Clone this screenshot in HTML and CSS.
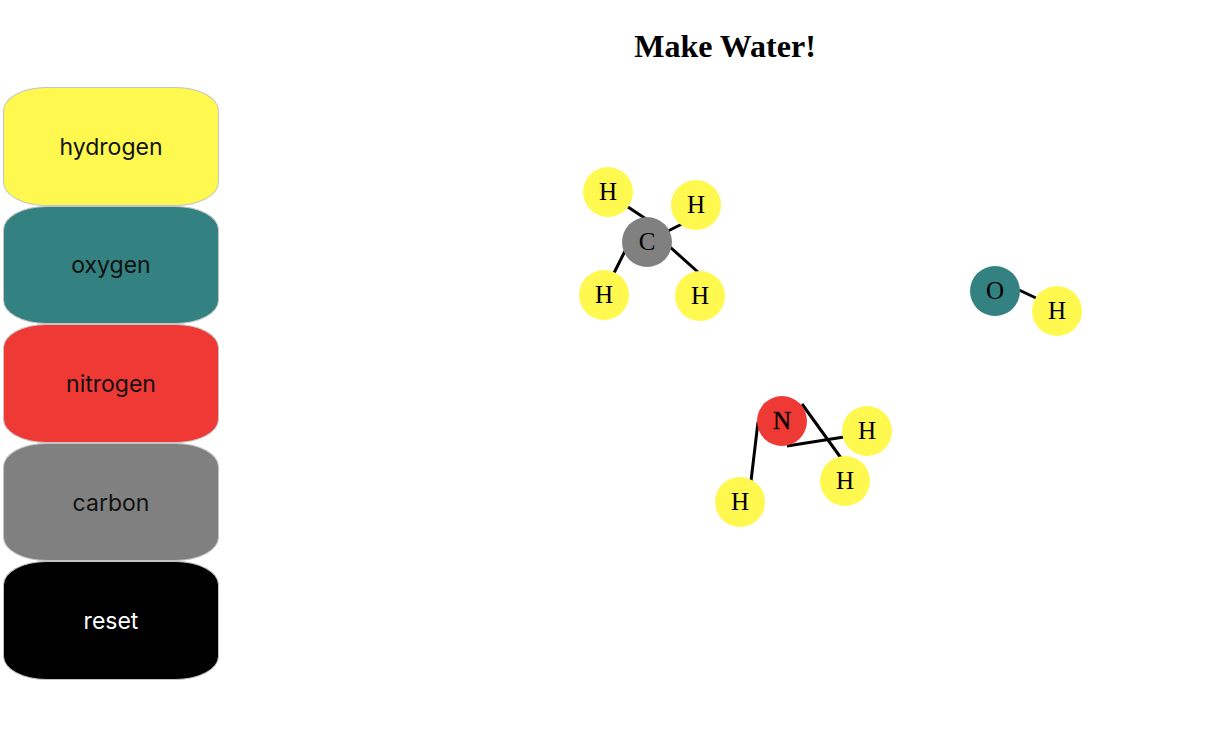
FILE: index.html
```html
<!DOCTYPE html>
<html lang="en">
<head>
  <meta charset="utf-8">
  <title>Make Water!</title>
  <link rel="stylesheet" href="styles.css">
</head>
<body>
  <nav class="palette" aria-label="Elements">
    <button type="button" class="element hydrogen">hydrogen</button>
    <button type="button" class="element oxygen">oxygen</button>
    <button type="button" class="element nitrogen">nitrogen</button>
    <button type="button" class="element carbon">carbon</button>
    <button type="button" class="element reset">reset</button>
  </nav>
  <main class="lab">
    <h1 class="title">Make Water!</h1>
    <svg class="stage">
      <!-- methane -->
      <g>
        <path class="bond" d="M409 120L427 132M449 144L463 137M406 164L395 186M451 160L480 186"/>
        <circle class="atom-h" cx="389" cy="105" r="25"/><text x="389" y="113">H</text>
        <circle class="atom-h" cx="477" cy="118" r="25"/><text x="477" y="126">H</text>
        <circle class="atom-c" cx="428" cy="155" r="25"/><text x="428" y="163">C</text>
        <circle class="atom-h" cx="385" cy="208" r="25"/><text x="385" y="216">H</text>
        <circle class="atom-h" cx="481" cy="209" r="25"/><text x="481" y="217">H</text>
      </g>
      <!-- hydroxide -->
      <g>
        <path class="bond" d="M800 203L817 211"/>
        <circle class="atom-o" cx="776" cy="204" r="25"/><text x="776" y="212">O</text>
        <circle class="atom-h" cx="838" cy="224" r="25"/><text x="838" y="232">H</text>
      </g>
      <!-- ammonia -->
      <g>
        <path class="bond" d="M539 335L532 394M583 317L622 371M568 359L625 350"/>
        <circle class="atom-n" cx="563" cy="334" r="25"/><text class="strong" x="563" y="342">N</text>
        <circle class="atom-h" cx="648" cy="344" r="25"/><text x="648" y="352">H</text>
        <circle class="atom-h" cx="626" cy="394" r="25"/><text x="626" y="402">H</text>
        <circle class="atom-h" cx="521" cy="415" r="25"/><text x="521" y="423">H</text>
      </g>
    </svg>
  </main>
</body>
</html>
```
FILE: styles.css
```css
* {
  box-sizing: border-box;
}

body {
  display: flex;
  min-height: 100vh;
  margin: 0;
  background: #fff;
  color: #000;
  font-family: "Liberation Serif", "Times New Roman", serif;
}

.palette {
  display: grid;
  grid-template-rows: repeat(5, 1fr);
  flex: 0 0 219px;
  padding: 87px 0 59px 3px;
}

.element {
  padding: 1px 0 0;
  border: 1px solid #c4c4c4;
  border-radius: 20%;
  color: #111;
  font-family: Inter, "Liberation Sans", sans-serif;
  font-size: 23px;
  line-height: 28px;
}

.hydrogen {
  background: #fff84f;
}

.oxygen {
  background: #338180;
}

.nitrogen {
  background: #ef3935;
}

.carbon {
  background: #808080;
}

.reset {
  background: #000;
  color: #fff;
}

.lab {
  display: flex;
  flex: 1;
  flex-direction: column;
  min-width: 0;
}

.title {
  margin: 0;
  padding: 28px 0 23px;
  font-size: 32px;
  line-height: 36px;
  text-align: center;
}

.stage {
  flex: 1;
  width: 100%;
}

.stage text {
  font-size: 25px;
  text-anchor: middle;
}

.stage .strong {
  paint-order: stroke;
  stroke: #000;
  stroke-opacity: 0.4;
  stroke-width: 1px;
}

.bond {
  fill: none;
  stroke: #000;
  stroke-width: 3px;
}

.atom-h {
  fill: #fff84f;
}

.atom-o {
  fill: #338180;
}

.atom-n {
  fill: #ef3935;
}

.atom-c {
  fill: #808080;
}
```
